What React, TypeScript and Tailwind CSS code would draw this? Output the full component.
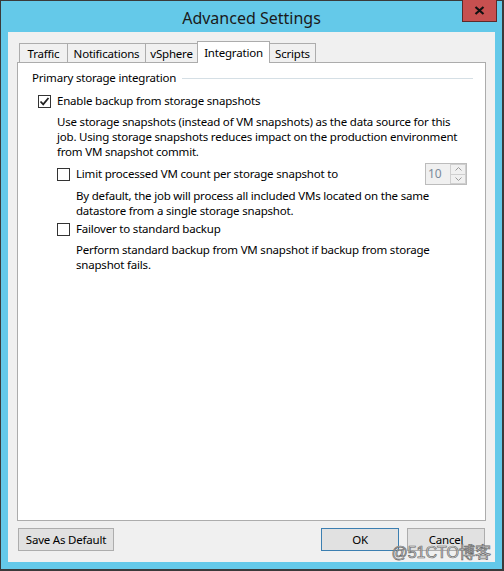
import React from "react";

const font = { fontFamily: '"Segoe UI", "Noto Sans", "Open Sans", sans-serif' };

function Check({ checked }: { checked?: boolean }) {
  return (
    <div className="w-[13px] h-[13px] border border-[#333333] bg-white flex items-center justify-center shrink-0">
      {checked && (
        <svg width="11" height="11" viewBox="0 0 11 11">
          <path d="M1.5 5.5 L4.2 8.3 L9.5 2" fill="none" stroke="#222" strokeWidth="1.8" />
        </svg>
      )}
    </div>
  );
}

function Tab({ label, active, w }: { label: string; active?: boolean; w: string }) {
  if (active)
    return (
      <div className={`${w} h-[22px] -mb-px bg-white border border-[#acacac] border-b-0 flex items-center justify-center text-black relative z-10`}>
        {label}
      </div>
    );
  return (
    <div className={`${w} h-[19px] bg-[#f0f0f0] border border-[#acacac] border-b-0 -ml-px first:ml-0 flex items-center justify-center pt-px text-black`}>
      {label}
    </div>
  );
}

export default function App() {
  return (
    <div className="w-[504px] h-[571px] bg-[#3a3a3a] p-px pr-[2px] pb-[2px]" style={font}>
      <div className="w-full h-full bg-[#64c9e9] flex flex-col px-[7px] pb-[7px]">
        <div className="h-[31px] relative flex items-center justify-center">
          <span className="text-[16px] text-[#1a1a1a] pt-[2px]">Advanced Settings</span>
          <div className="absolute right-[-2px] top-[-1px] w-[35px] h-[22px] bg-[#c75050] border border-[#5c2a2a] border-t-0 flex items-center justify-center">
            <svg width="11" height="9" viewBox="0 0 11 9">
              <path d="M1.5 1 L9.5 8 M9.5 1 L1.5 8" stroke="#111" strokeWidth="2.2" />
            </svg>
          </div>
        </div>
        <div className="flex-1 bg-[#f0f0f0] flex flex-col px-[9px] pt-[9px] text-[11.5px] tracking-[-0.2px]">
          <div className="flex items-end pl-[2px] h-[21px]">
            <Tab label="Traffic" w="w-[49px]" />
            <Tab label="Notifications" w="w-[79px]" />
            <Tab label="vSphere" w="w-[53px]" />
            <Tab label="Integration" active w="w-[73px] -ml-px" />
            <Tab label="Scripts" w="w-[47px]" />
          </div>
          <div className="h-[459px] bg-white border border-[#acacac] pt-[7px] px-[14px] text-black">
            <div className="flex items-center gap-[6px] h-[16px]">
              <span>Primary storage integration</span>
              <div className="flex-1 h-px bg-[#d5dfe5] mr-[-2px]" />
            </div>
            <div className="mt-[7px] ml-[6px] flex items-center gap-[6px] h-[16px]">
              <Check checked />
              <span>Enable backup from storage snapshots</span>
            </div>
            <div className="ml-[25px] mt-[5px] leading-[15px] w-[410px]">
              Use storage snapshots (instead of VM snapshots) as the data source for this job. Using storage snapshots reduces impact on the production environment from VM snapshot commit.
            </div>
            <div className="ml-[25px] mt-[4px] flex items-center h-[22px]">
              <div className="flex items-center gap-[6px]">
                <Check />
                <span>Limit processed VM count per storage snapshot to</span>
              </div>
              <div className="flex-1" />
              <div className="w-[42px] h-[22px] border border-[#bcbcbc] bg-[#f0f0f0] flex mr-[4px] tracking-normal">
                <span className="flex-1 text-[12px] text-[#7a8a9a] pl-[2px] leading-[19px]">10</span>
                <div className="w-[16px] flex flex-col">
                  <div className="flex-1 border border-[#cfcfcf] flex items-center justify-center">
                    <svg width="7" height="4" viewBox="0 0 7 4"><path d="M0.5 3.5 L3.5 0.5 L6.5 3.5" fill="none" stroke="#9a9a9a" /></svg>
                  </div>
                  <div className="flex-1 border border-t-0 border-[#cfcfcf] flex items-center justify-center">
                    <svg width="7" height="4" viewBox="0 0 7 4"><path d="M0.5 0.5 L3.5 3.5 L6.5 0.5" fill="none" stroke="#9a9a9a" /></svg>
                  </div>
                </div>
              </div>
            </div>
            <div className="ml-[44px] mt-[3px] leading-[15px] w-[380px]">
              By default, the job will process all included VMs located on the same datastore from a single storage snapshot.
            </div>
            <div className="ml-[25px] mt-[3px] flex items-center gap-[6px] h-[16px]">
              <Check />
              <span>Failover to standard backup</span>
            </div>
            <div className="ml-[44px] mt-[5px] leading-[15px] w-[380px]">
              Perform standard backup from VM snapshot if backup from storage snapshot fails.
            </div>
          </div>
          <div className="flex mt-[7px] items-start text-black relative">
            <div className="ml-[1px] w-[96px] h-[23px] bg-[#e1e1e1] border border-[#adadad] flex items-center justify-center">Save As Default</div>
            <div className="flex-1" />
            <div className="w-[78px] h-[23px] bg-[#e1e1e1] border border-[#3c7fb1] flex items-center justify-center">OK</div>
            <div className="w-[78px] h-[23px] ml-[8px] mr-[1px] bg-[#e1e1e1] border border-[#adadad] flex items-center justify-center">Cancel</div>
            <div
              className="absolute right-[-5px] top-[15px] text-[16px] tracking-normal text-[#e0e0e0] leading-[20px]"
              style={{ fontFamily: '"Liberation Sans", "Noto Sans CJK SC", sans-serif', WebkitTextStroke: "0.7px #6a6a6a" }}
            >
              @51CTO博客
            </div>
          </div>
        </div>
      </div>
    </div>
  );
}
